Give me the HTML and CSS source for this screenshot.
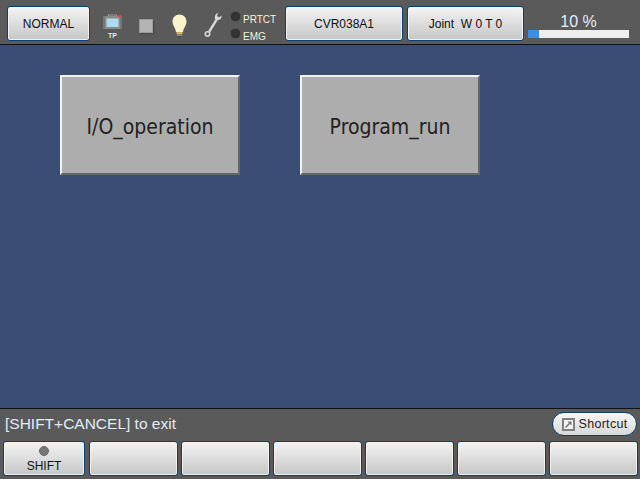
FILE: index.html
```html
<!DOCTYPE html>
<html lang="en">
<head>
<meta charset="utf-8">
<title>Teach pendant</title>
<link rel="stylesheet" href="styles.css">
</head>
<body>
<div class="screen">
  <header class="top">
    <button class="btn mode">NORMAL</button>
    <div class="tp">
      <svg width="19" height="15" viewBox="0 0 19 15">
        <path d="M5.500 3V1h8v2" fill="none" stroke="#9a9a9a" stroke-width="1.200"/>
        <rect x="0" y="2" width="19" height="13" rx="2" fill="#8b8b8b"/>
        <rect x="0" y="2" width="2" height="13" fill="#767676"/>
        <rect x="17" y="2" width="2" height="13" fill="#767676"/>
        <rect x="3.500" y="4.500" width="12" height="8.500" fill="#a9dcec"/>
        <rect x="15" y="1" width="3" height="2.500" fill="#d8483f"/>
      </svg>
      <span class="tp-label">TP</span>
    </div>
    <div class="stop"></div>
    <svg class="bulb" width="15" height="24" viewBox="0 0 15 24">
      <path d="M7.500 0.500C3.500 0.500 0.500 3.500 0.500 7.500c0 4 3 6.500 3.500 10.500h7c.5-4 3.500-6.500 3.500-10.500C14.500 3.500 11.500 0.500 7.500 0.500z" fill="#f7f4cb"/>
      <rect x="4.500" y="18" width="6" height="2" fill="#cdb653"/>
      <rect x="5" y="20" width="5" height="2" fill="#8f8c6a"/>
      <rect x="6.500" y="22" width="2" height="1.500" fill="#47473c"/>
    </svg>
    <svg class="wrench" width="18" height="26" viewBox="0 0 18 26">
      <path d="M13 7L5 20" stroke="#d6d6d6" stroke-width="2.400" fill="none"/>
      <path d="M10.800 6.500C10.500 3.500 12 1.500 14 .8l-1 3.200 2 1.500 2.500-2c.3 2.600-1.500 5.200-5 4.500z" fill="#dcdcdc"/>
      <circle cx="3.500" cy="22" r="2.200" fill="none" stroke="#d6d6d6" stroke-width="1.600"/>
    </svg>
    <div class="lamps">
      <div class="lamp-row"><i class="lamp"></i><span class="lamp-text">PRTCT</span></div>
      <div class="lamp-row"><i class="lamp"></i><span class="lamp-text">EMG</span></div>
    </div>
    <button class="btn name">CVR038A1</button>
    <button class="btn name joint">Joint&nbsp; W 0 T 0</button>
    <div class="speed">
      <span class="speed-text">10 %</span>
      <div class="track"><div class="fill"></div></div>
    </div>
  </header>
  <main class="main">
    <button class="tile">I/O_operation</button>
    <button class="tile">Program_run</button>
  </main>
  <footer class="bottom">
    <div class="status">
      <span class="msg">[SHIFT+CANCEL] to exit</span>
      <button class="shortcut">
        <svg width="13" height="13" viewBox="0 0 13 13">
          <rect x="1" y="1" width="11" height="11" fill="#f2f2f2" stroke="#808080" stroke-width="2"/>
          <path d="M3.500 9.500L8 5" stroke="#707070" stroke-width="1.400"/>
          <path d="M5.500 3.500h4v4z" fill="#707070"/>
        </svg>
        <span>Shortcut</span>
      </button>
    </div>
    <div class="keys">
      <button class="btn key first"><i class="led"></i><span>SHIFT</span></button>
      <button class="btn key"></button>
      <button class="btn key"></button>
      <button class="btn key"></button>
      <button class="btn key"></button>
      <button class="btn key"></button>
      <button class="btn key"></button>
    </div>
  </footer>
</div>
</body>
</html>
```
FILE: styles.css
```css
* { box-sizing: border-box; }
html, body { margin: 0; padding: 0; }
body { width: 640px; height: 479px; overflow: hidden; font-family: "Liberation Sans", Arial, sans-serif; }
button { font-family: inherit; padding: 0; margin: 0; }
.screen { display: flex; flex-direction: column; width: 640px; height: 479px; background: #5a5a5a; }
.top { flex: 0 0 45px; display: flex; align-items: flex-start; padding: 6px 0 0 7px; background: #5a5a5a; border-bottom: 1px solid #111; }
.btn {
  border: 1px solid #0d3f6e; border-radius: 3px; color: #111; font-size: 12px;
  background: linear-gradient(#f4f4f4, #c6c6c6);
  box-shadow: inset 0 0 0 1px #f2f2f2;
}
.mode { width: 83px; height: 35px; }
.tp { width: 19px; margin-left: 13px; margin-top: 8px; display: flex; flex-direction: column; align-items: center; }
.tp-label { font-size: 7px; font-weight: bold; color: #e8e8e8; line-height: 9px; margin-top: 2px; }
.stop { width: 14px; height: 14px; margin: 13px 0 0 17px; background: #b4b4b4; border: 1px solid #9a9a9a; box-shadow: 1px 1px 2px #444; }
.bulb { margin: 8px 0 0 19px; }
.wrench { margin: 6px 0 0 17px; }
.lamps { margin: 2px 0 0 9px; width: 45px; display: flex; flex-direction: column; }
.lamp-row { display: flex; align-items: center; height: 17px; gap: 3px; color: #f5f5d5; font-size: 10px; }
.lamp { width: 9px; height: 9px; border-radius: 50%; background: #333; box-shadow: 0 0 1px #222; flex: none; }
.lamp-text { padding-top: 5px; }
.name { width: 118px; height: 35px; margin-left: 9px; }
.joint { width: 117px; margin-left: 4px; }
.speed { margin-left: 4px; width: 101px; display: flex; flex-direction: column; align-items: center; }
.speed-text { color: #e4eef8; font-size: 16px; line-height: 18px; margin-top: 7px; }
.track { width: 101px; height: 8px; margin-top: -1px; background: #eee; }
.fill { width: 11px; height: 100%; background: #3a8fe8; }
.main { flex: 1; display: flex; align-items: flex-start; gap: 60px; padding: 30px 0 0 60px; background: #394d75; }
.tile {
  width: 180px; height: 100px; padding-top: 3px; font-size: 21px; color: #222;
  font-family: "DejaVu Sans", sans-serif; font-stretch: condensed;
  background: #adadad; border: 2px solid; border-color: #f4f4f4 #666 #666 #f4f4f4;
}
.bottom { flex: 0 0 71px; display: flex; flex-direction: column; background: #5a5a5a; border-top: 1px solid #111; }
.status { display: flex; align-items: flex-start; justify-content: space-between; height: 32px; padding: 3px 3px 0 5px; }
.msg { color: #e2ecf6; font-size: 15.500px; line-height: 24px; }
.shortcut {
  width: 85px; height: 24px; border-radius: 12px; border: 1px solid #0d3f6e;
  background: linear-gradient(#f6f6f6, #d8d8d8); display: flex; align-items: center; justify-content: center; gap: 4px;
  font-size: 12.500px; letter-spacing: .3px; color: #222;
}
.keys { display: flex; gap: 3px; padding-left: 3px; }
.key { flex: 0 0 89px; height: 35px; }
.key.first { flex: 0 0 82px; margin-right: 1px; display: flex; flex-direction: column; align-items: center; justify-content: flex-start; padding-top: 4px; }
.led { width: 10px; height: 10px; border-radius: 50%; background: #777; border: 1px solid #666; }
.key.first span { line-height: 13px; margin-top: 4px; }
```
